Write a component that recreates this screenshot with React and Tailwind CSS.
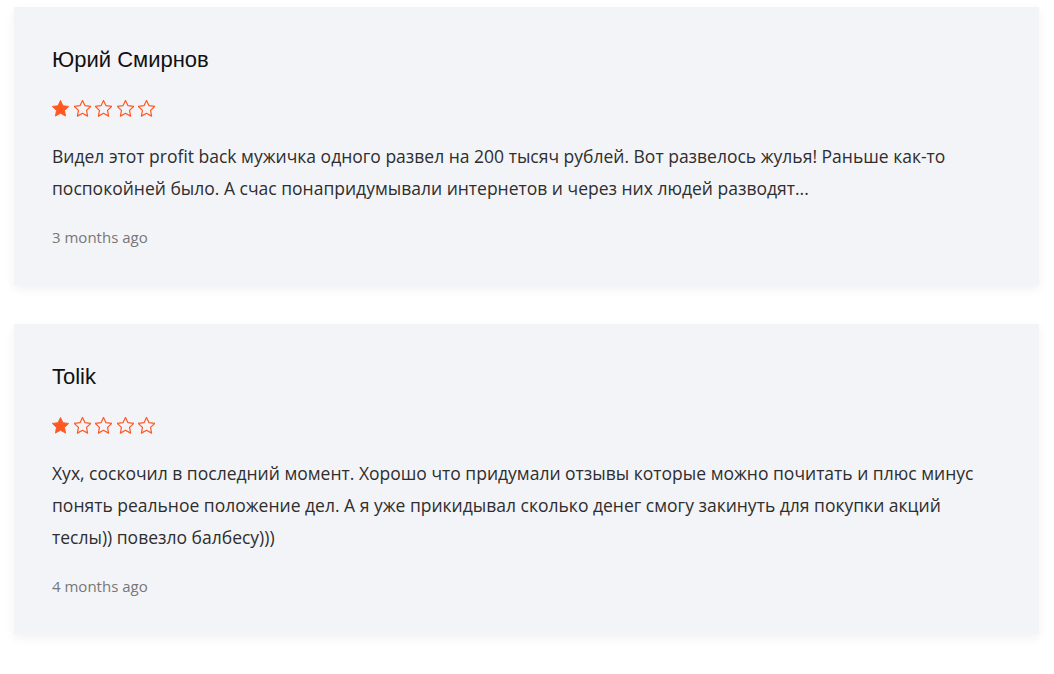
import React from "react";

const reviews = [
  {
    name: "Юрий Смирнов",
    rating: 1,
    text: "Видел этот profit back мужичка одного развел на 200 тысяч рублей. Вот развелось жулья! Раньше как-то поспокойней было. А счас понапридумывали интернетов и через них людей разводят...",
    when: "3 months ago",
  },
  {
    name: "Tolik",
    rating: 1,
    text: "Хух, соскочил в последний момент. Хорошо что придумали отзывы которые можно почитать и плюс минус понять реальное положение дел. А я уже прикидывал сколько денег смогу закинуть для покупки акций теслы)) повезло балбесу)))",
    when: "4 months ago",
  },
];

const STAR = "M12 2.5l2.95 6.2 6.75.85-4.95 4.7 1.25 6.7L12 17.7l-6 3.25 1.25-6.7L2.3 9.55l6.75-.85L12 2.5z";

function Stars({ value }) {
  return (
    <div className="flex items-center gap-[4.5px] h-4">
      {[0, 1, 2, 3, 4].map((i) => (
        <svg key={i} viewBox="2 2 20 20" className="w-[17px] h-[17px]">
          {i < value ? (
            <path d={STAR} fill="#ff5722" stroke="#ff5722" strokeWidth="1" strokeLinejoin="round" />
          ) : (
            <path d={STAR} fill="none" stroke="#ff5722" strokeWidth="1.4" strokeLinejoin="round" />
          )}
        </svg>
      ))}
    </div>
  );
}

export default function App() {
  return (
    <div className="min-h-screen bg-white pt-[7px] pl-[14px] pr-[15px]">
      {reviews.map((r) => (
        <div
          key={r.name}
          className="bg-[#f3f4f8] px-[38px] pt-[41px] pb-[38px] mb-[39px] shadow-[0_4px_10px_rgba(0,0,0,0.06)]"
        >
          <h3 className="text-[22px] leading-[24px] text-[#111] font-['Liberation_Sans',Arial,sans-serif]">
            {r.name}
          </h3>
          <div className="mt-[28px]">
            <Stars value={r.rating} />
          </div>
          <p className="mt-[24px] text-[17.5px] leading-[32px] text-[#2e2e2e] font-['Open_Sans',sans-serif]">
            {r.text}
          </p>
          <div className="mt-[23px] text-[15px] leading-[20px] text-[#777] font-['Open_Sans',sans-serif]">
            {r.when}
          </div>
        </div>
      ))}
    </div>
  );
}
